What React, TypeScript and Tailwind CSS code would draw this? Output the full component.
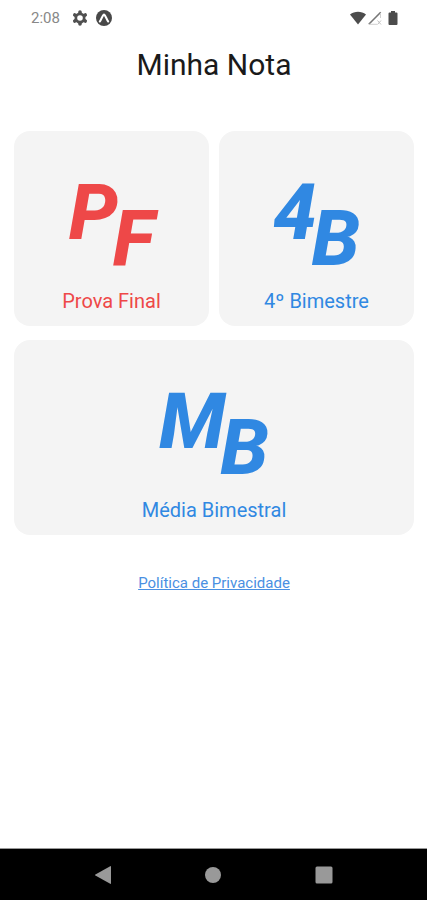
type Grade = {
  first: string;
  second: string;
  label: string;
  tone: string;
  span: string;
};

const grades: Grade[] = [
  { first: "P", second: "F", label: "Prova Final", tone: "text-[#ee4848]", span: "" },
  { first: "4", second: "B", label: "4º Bimestre", tone: "text-[#3088e2]", span: "" },
  { first: "M", second: "B", label: "Média Bimestral", tone: "text-[#3088e2]", span: "col-span-2" },
];

function GradeCard({ first, second, label, tone, span }: Grade) {
  return (
    <button
      type="button"
      className={`flex flex-col items-center rounded-2xl bg-[#f4f4f4] pt-[43px] pb-[11px] ${tone} ${span}`}
    >
      <span
        aria-hidden="true"
        className="flex items-start text-[78px] leading-[78px] font-extrabold italic"
      >
        <span>{first}</span>
        <span className="mt-[26px] -ml-[5px]">{second}</span>
      </span>
      <span className="mt-[9px] text-xl leading-7">{label}</span>
    </button>
  );
}

function StatusBar() {
  return (
    <div className="flex h-9 items-center justify-between pr-[29px] pl-[31px]">
      <div className="flex items-center">
        <span className="w-[41px] text-[15px] leading-5 text-[#888888]">2:08</span>
        <svg className="h-4 w-4" viewBox="0 0 16 16" aria-hidden="true">
          <path
            d="M8 2v12M2.800 5l10.400 6M2.800 11l10.400-6"
            stroke="#505050"
            strokeWidth="3.600"
            strokeLinecap="round"
          />
          <circle cx="8" cy="8" r="5.500" fill="#505050" />
          <circle cx="8" cy="8" r="2.800" fill="#ffffff" />
        </svg>
        <svg className="ml-2 h-4 w-4" viewBox="0 0 16 16" aria-hidden="true">
          <circle cx="8" cy="8" r="8" fill="#484848" />
          <path
            d="M3.800 11.500C5.200 10 6.500 5 8 4.500c1.500.5 2.800 5.500 4.200 7"
            fill="none"
            stroke="#ffffff"
            strokeWidth="2"
            strokeLinecap="round"
          />
        </svg>
      </div>
      <div className="flex items-center">
        <svg className="h-[14px] w-4" viewBox="0 0 16 14" aria-hidden="true">
          <path d="M0 3.500C4.500-.2 11.500-.2 16 3.500L8 13.500z" fill="#4c4c4c" />
        </svg>
        <svg className="ml-[2px] h-[14px] w-[14px]" viewBox="0 0 14 14" aria-hidden="true">
          <path d="M.8 13.200L12.700 1.200" stroke="#777777" strokeWidth="1.600" />
          <path d="M1 13.300h8M12.500 2v5" stroke="#d0d0d0" strokeWidth="1" />
          <path d="M9.500 9.500l3.500 4m0-4l-3.500 4" stroke="#c0c0c0" strokeWidth="1" />
        </svg>
        <svg className="ml-[6px] h-[14px] w-[10px]" viewBox="0 0 10 14" aria-hidden="true">
          <path d="M3 0h4v1.500h1.500q1 0 1 1V13q0 1-1 1h-7q-1 0-1-1V2.500q0-1 1-1H3z" fill="#4c4c4c" />
        </svg>
      </div>
    </div>
  );
}

function NavigationBar() {
  return (
    <nav className="grid h-[52px] grid-cols-3 items-center justify-items-center border-t border-[#999999] bg-black px-12 text-[#999999]">
      <button type="button" aria-label="Voltar">
        <svg className="h-[18px] w-4" viewBox="0 0 16 18" fill="currentColor" aria-hidden="true">
          <path d="M15.200.2q.8-.4.8.6v16.400q0 1-.8.600L.4 9.500q-.8-.5 0-1z" />
        </svg>
      </button>
      <button type="button" aria-label="Início">
        <svg className="h-4 w-4" viewBox="0 0 16 16" fill="currentColor" aria-hidden="true">
          <circle cx="8" cy="8" r="8" />
        </svg>
      </button>
      <button type="button" aria-label="Recentes">
        <svg className="h-[18px] w-[18px]" viewBox="0 0 18 18" fill="currentColor" aria-hidden="true">
          <rect x="0.500" y="0.500" width="17" height="17" rx="1.500" />
        </svg>
      </button>
    </nav>
  );
}

export default function App() {
  return (
    <div className="flex min-h-screen flex-col bg-white font-['Roboto',sans-serif]">
      <StatusBar />
      <main className="flex flex-1 flex-col items-center pr-[13px] pl-[14px]">
        <h1 className="mt-2 text-[30px] leading-[42px] text-[#1a1a1a]">Minha Nota</h1>
        <div className="mt-[45px] grid w-full grid-cols-2 gap-x-[10px] gap-y-[14px]">
          {grades.map((grade) => (
            <GradeCard key={grade.label} {...grade} />
          ))}
        </div>
        <a href="#privacidade" className="mt-9 text-[15px] leading-6 text-[#4a90e2] underline">
          Política de Privacidade
        </a>
      </main>
      <NavigationBar />
    </div>
  );
}
